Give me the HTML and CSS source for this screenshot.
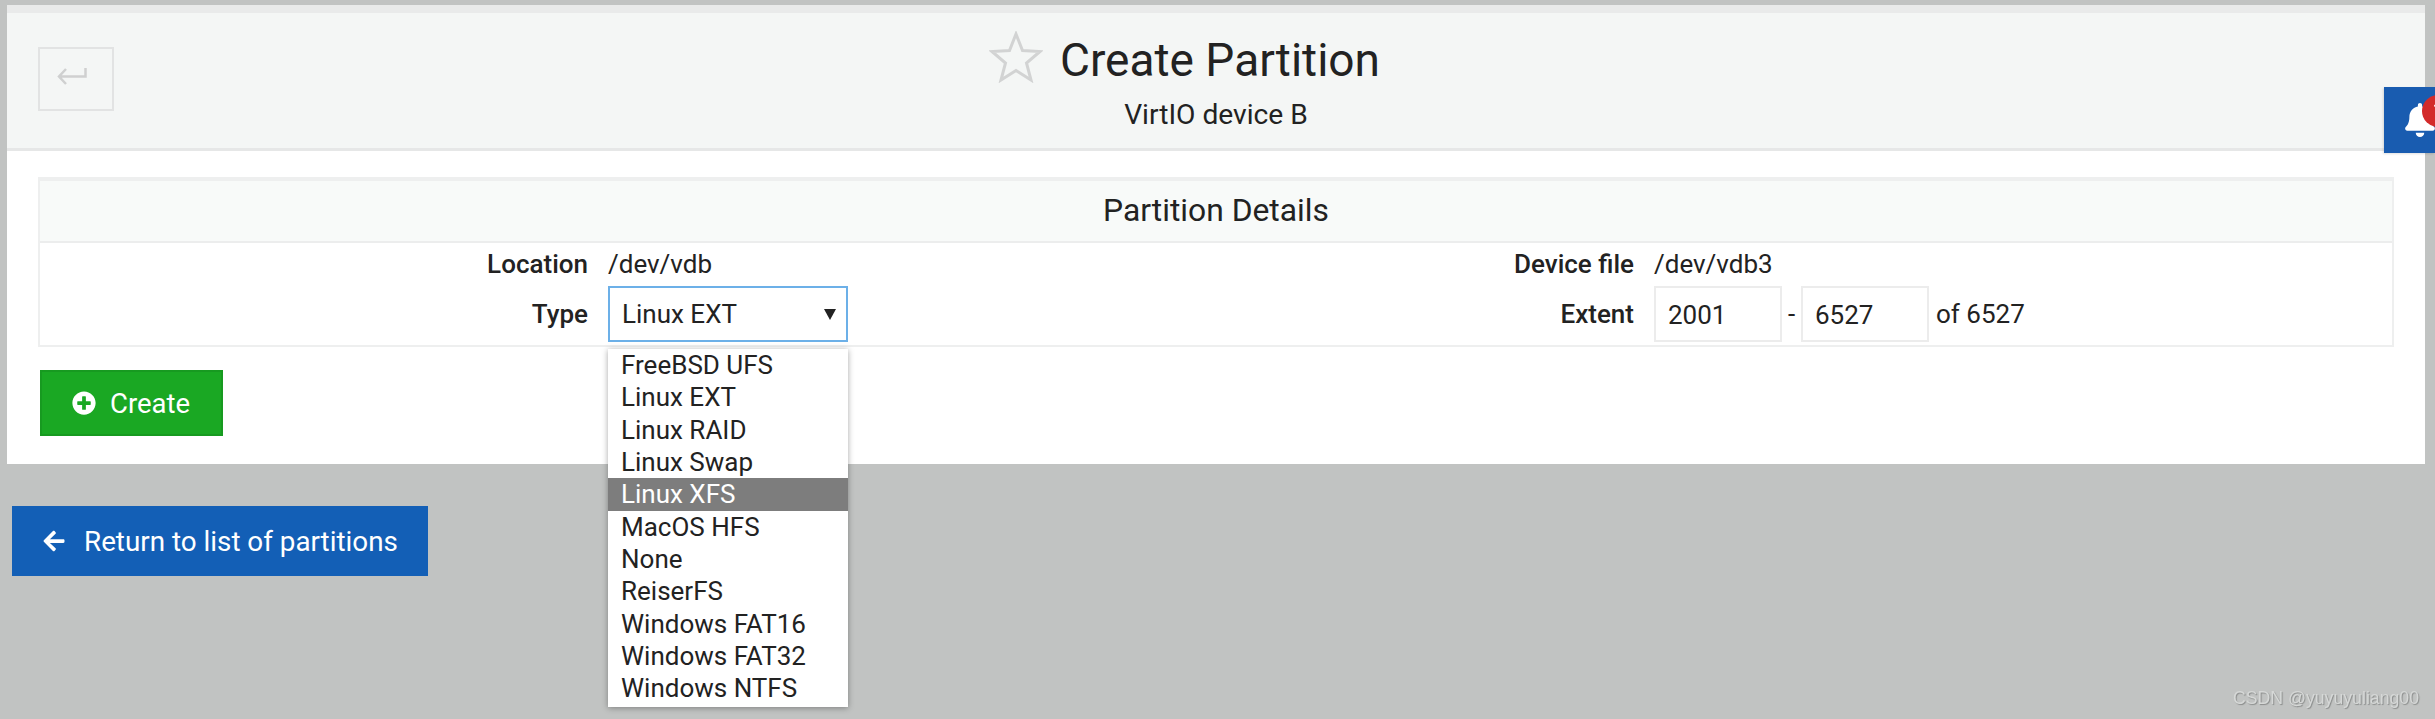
FILE: index.html
```html
<!DOCTYPE html>
<html lang="en">
  <head>
    <meta charset="utf8">
    <title>Create Partition</title>
    <link rel="stylesheet" href="styles.css">
  </head>

  <body>
    <main class="panel">
      <header class="panel-head">
        <a class="back-btn">
          <svg width="30" height="18" viewBox="0 0 30 18"><path d="M28.5 1v8.5H2M9 2 2 9.500 9 17" fill="none" stroke="#cfd0d0" stroke-width="2.500"/></svg>
        </a>
        <div class="title-row">
          <svg class="star" width="54" height="52" viewBox="0 0 54 52"><polygon points="27,3 33.500,19.500 51,20.500 37.500,32 42,49 27,39.500 12,49 16.500,32 3,20.500 20.500,19.500" fill="none" stroke="#d2d3d3" stroke-width="3"/></svg>
          <h1>Create Partition</h1>
        </div>
        <p class="subtitle">VirtIO device B</p>
      </header>

      <div class="panel-body">
        <section class="card">
          <h2>Partition Details</h2>
          <div class="details">
            <b>Location</b>
            <span>/dev/vdb</span>
            <b>Device file</b>
            <span>/dev/vdb3</span>

            <b>Type</b>
            <div class="select-wrap">
              <div class="select">Linux EXT<i class="caret"></i></div>
              <ul class="options">
                <li>FreeBSD UFS</li>
                <li>Linux EXT</li>
                <li>Linux RAID</li>
                <li>Linux Swap</li>
                <li class="active">Linux XFS</li>
                <li>MacOS HFS</li>
                <li>None</li>
                <li>ReiserFS</li>
                <li>Windows FAT16</li>
                <li>Windows FAT32</li>
                <li>Windows NTFS</li>
              </ul>
            </div>
            <b>Extent</b>
            <div class="extent">
              <div class="num">2001</div>
              <span class="dash">-</span>
              <div class="num">6527</div>
              <span class="of">of 6527</span>
            </div>
          </div>
        </section>

        <a class="btn btn-create">
          <svg width="24" height="24" viewBox="0 0 512 512"><path fill="#fff" d="M256 8C119 8 8 119 8 256s111 248 248 248 248-111 248-248S393 8 256 8zm144 276c0 6.600-5.400 12-12 12h-92v92c0 6.600-5.400 12-12 12h-56c-6.600 0-12-5.400-12-12v-92h-92c-6.600 0-12-5.400-12-12v-56c0-6.600 5.400-12 12-12h92v-92c0-6.600 5.400-12 12-12h56c6.600 0 12 5.400 12 12v92h92c6.600 0 12 5.400 12 12v56z"/></svg>
          Create
        </a>
      </div>
    </main>

    <a class="btn btn-return">
      <svg width="22" height="24" viewBox="0 0 448 512"><path fill="#fff" d="M257.500 445.100l-22.200 22.200c-9.400 9.400-24.600 9.400-33.900 0L7 273c-9.400-9.400-9.400-24.600 0-33.900L201.400 44.700c9.400-9.400 24.600-9.400 33.900 0l22.200 22.200c9.500 9.500 9.300 25-.4 34.300L136.600 216H424c13.300 0 24 10.700 24 24v32c0 13.300-10.700 24-24 24H136.600l120.500 114.800c9.800 9.300 10 24.800.4 34.300z"/></svg>
      Return to list of partitions
    </a>

    <div class="notify">
      <svg class="bell" width="30" height="34" viewBox="0 0 448 512"><path fill="#fff" d="M224 512c35.320 0 63.970-28.650 63.970-64H160.030c0 35.350 28.650 64 63.970 64zm215.390-149.710c-19.320-20.760-55.470-51.990-55.470-154.290 0-77.700-54.480-139.900-127.940-155.160V32c0-17.670-14.320-32-31.980-32s-31.980 14.330-31.980 32v20.840C118.560 68.100 64.080 130.300 64.080 208c0 102.300-36.150 133.530-55.470 154.290-6 6.450-8.660 14.160-8.610 21.710.11 16.400 12.980 32 32.100 32h383.800c19.120 0 32-15.600 32.100-32 .05-7.550-2.610-15.270-8.610-21.710z"/></svg>
      <span class="badge">1</span>
    </div>

    <div class="watermark">CSDN @yuyuyuliang00</div>
  </body>
</html>
```

FILE: styles.css
```css
html, body {
  height: 100%;
  margin: 0;
  overflow: hidden;
}

body {
  background-color: #c1c3c2;
  color: #222;
  font-family: Roboto, "Liberation Sans", sans-serif;
  font-size: 26px;
}

h1, h2, p, ul {
  margin: 0;
  padding: 0;
}

.panel {
  margin: 5px 10px 0 7px;
  background-color: #fff;
}

.panel-head {
  position: relative;
  height: 116px;
  padding-top: 19px;
  background-color: #f4f6f5;
  border-top: 8px solid #e9eaea;
  border-bottom: 3px solid #e6e7e7;
}

.back-btn {
  position: absolute;
  left: 31px;
  top: 34px;
  width: 76px;
  height: 64px;
  box-sizing: border-box;
  border: 2px solid #e2e3e3;
  display: flex;
  align-items: center;
  justify-content: center;
  padding: 0 8px 6px 0;
}

.title-row {
  display: grid;
  grid-template-columns: 1fr auto 1fr;
  column-gap: 17px;
  align-items: center;
  padding-left: 8px;
}

.star {
  justify-self: end;
  margin-top: -6px;
}

.title-row h1 {
  font-size: 46px;
  font-weight: 400;
  line-height: 56px;
}

.subtitle {
  text-align: center;
  font-size: 28.200px;
  line-height: 34px;
  margin-top: 10px;
}

.panel-body {
  padding: 26px 31px 28px;
}

.card {
  border: 2px solid #eeefef;
  border-top-width: 4px;
}

.card h2 {
  height: 62px;
  line-height: 58px;
  text-align: center;
  font-size: 31.800px;
  font-weight: 400;
  background-color: #f8faf9;
  border-bottom: 2px solid #eceded;
  box-sizing: border-box;
}

.details {
  display: grid;
  grid-template-columns: 548px 608px 398px 1fr;
  grid-template-rows: 42px 58px;
  column-gap: 20px;
  align-items: center;
  padding-bottom: 2px;
}

.details b {
  text-align: right;
  font-weight: 500;
}

.select-wrap {
  position: relative;
  width: 240px;
}

.select {
  display: flex;
  align-items: center;
  justify-content: space-between;
  height: 56px;
  box-sizing: border-box;
  padding: 0 10px 0 12px;
  border: 2px solid #6cb0e8;
  background-color: #fff;
}

.caret {
  width: 0;
  height: 0;
  border-left: 6px solid transparent;
  border-right: 6px solid transparent;
  border-top: 11px solid #222;
}

.options {
  position: absolute;
  left: 0;
  top: 63px;
  width: 100%;
  list-style: none;
  background-color: #fff;
  padding-bottom: 2px;
  box-shadow: 0 1px 6px rgba(0, 0, 0, 0.35);
  z-index: 5;
}

.options li {
  height: 32.330px;
  line-height: 32.330px;
  padding-left: 13px;
}

.options .active {
  background-color: #7d7d7d;
  color: #fff;
}

.extent {
  display: flex;
  align-items: center;
}

.num {
  width: 128px;
  height: 56px;
  box-sizing: border-box;
  border: 2px solid #ececec;
  padding-left: 12px;
  line-height: 54px;
}

.dash {
  width: 19px;
  text-align: center;
}

.of {
  margin-left: 7px;
}

.btn {
  display: inline-flex;
  align-items: center;
  box-sizing: border-box;
  color: #fff;
  font-size: 27.500px;
}

.btn-create {
  display: flex;
  margin: 23px 0 0 2px;
  width: 183px;
  height: 66px;
  padding-left: 30px;
  gap: 14px;
  background-color: #1aa823;
  border: 2px solid #179a20;
}

.btn-return {
  margin: 42px 0 0 12px;
  width: 416px;
  height: 70px;
  padding-left: 31px;
  gap: 19px;
  background-color: #135fb6;
  font-size: 27.800px;
}

.notify {
  position: fixed;
  right: 0;
  top: 87px;
  width: 51px;
  height: 66px;
  overflow: hidden;
  background-color: #195cb0;
  box-shadow: -1px 1px 2px rgba(0, 0, 0, 0.12);
}

.bell {
  position: absolute;
  left: 21px;
  top: 16px;
}

.badge {
  position: absolute;
  left: 38px;
  top: 8px;
  width: 32px;
  height: 32px;
  border-radius: 50%;
  background-color: #d32a2a;
  color: #fff;
  font-size: 20px;
  line-height: 32px;
  text-align: center;
}

.watermark {
  position: fixed;
  right: 16px;
  bottom: 10px;
  color: #d6d8d7;
  font-family: "Liberation Sans", sans-serif;
  font-size: 17.700px;
  text-shadow: 1px 1px 1px #8a8c8b;
}
```
